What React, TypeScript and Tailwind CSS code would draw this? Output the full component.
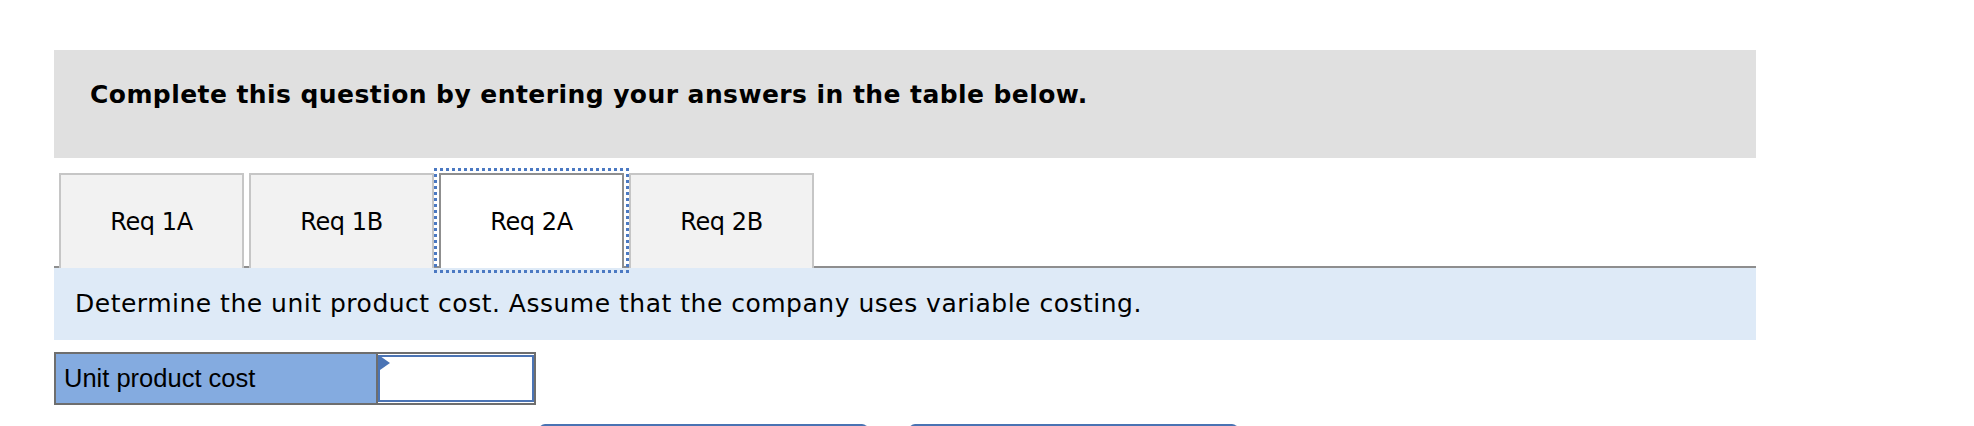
const tabs = ["Req 1A", "Req 1B", "Req 2A", "Req 2B"];

export default function App() {
  const active = 2;

  return (
    <div className="h-[426px] w-full overflow-hidden bg-white font-['DejaVu_Sans',Verdana,sans-serif] text-black">
      <div className="ml-[54px] w-[1702px] pt-[50px]">
        <div className="flex h-[108px] items-start bg-[#e0e0e0] pl-[36px] pt-[31px]">
          <h2 className="text-[25px] font-bold leading-[28px] tracking-[0.43px]">
            Complete this question by entering your answers in the table below.
          </h2>
        </div>

        <div className="mt-[15px] flex gap-[5px] border-b-2 border-[#8e8e8e] pl-[5px]">
          {tabs.map((tab, i) => (
            <button
              key={tab}
              className={`-mb-[2px] flex h-[95px] w-[185px] items-center justify-center border-2 border-b-0 text-[24px] tracking-[-0.4px] ${
                i === active
                  ? "border-[#8f8f8f] bg-white outline-[3px] outline-offset-[2px] outline-[#4b79c2] outline-dotted"
                  : "border-[#c6c6c6] bg-[#f2f2f2]"
              }`}
            >
              {tab}
            </button>
          ))}
        </div>

        <div className="flex h-[72px] items-center bg-[#deeaf7] pl-[21px]">
          <p className="text-[25px] tracking-[0.5px]">
            Determine the unit product cost. Assume that the company uses variable costing.
          </p>
        </div>

        <table className="mt-[12px] border-collapse">
          <tbody>
            <tr>
              <td className="h-[51px] w-[322px] border-2 border-[#6e6e6e] bg-[#84abe0] pl-[8px] font-['Liberation_Sans',Arial,sans-serif] text-[25.5px]">
                Unit product cost
              </td>
              <td className="relative w-[158px] border-2 border-[#6e6e6e] p-0">
                <div className="h-[47px] w-full border-2 border-[#4b74b5] bg-white" />
                <span className="absolute left-[2px] top-[2px] h-0 w-0 border-y-[7px] border-l-[10px] border-y-transparent border-l-[#4b74b5]" />
              </td>
            </tr>
          </tbody>
        </table>

        <div className="mt-[19px] flex gap-[41px] pl-[485px]">
          <div className="h-[20px] w-[329px] rounded-t-[6px] border-x-2 border-t-2 border-[#4a73b3]" />
          <div className="h-[20px] w-[329px] rounded-t-[6px] border-x-2 border-t-2 border-[#4a73b3]" />
        </div>
      </div>
    </div>
  );
}
